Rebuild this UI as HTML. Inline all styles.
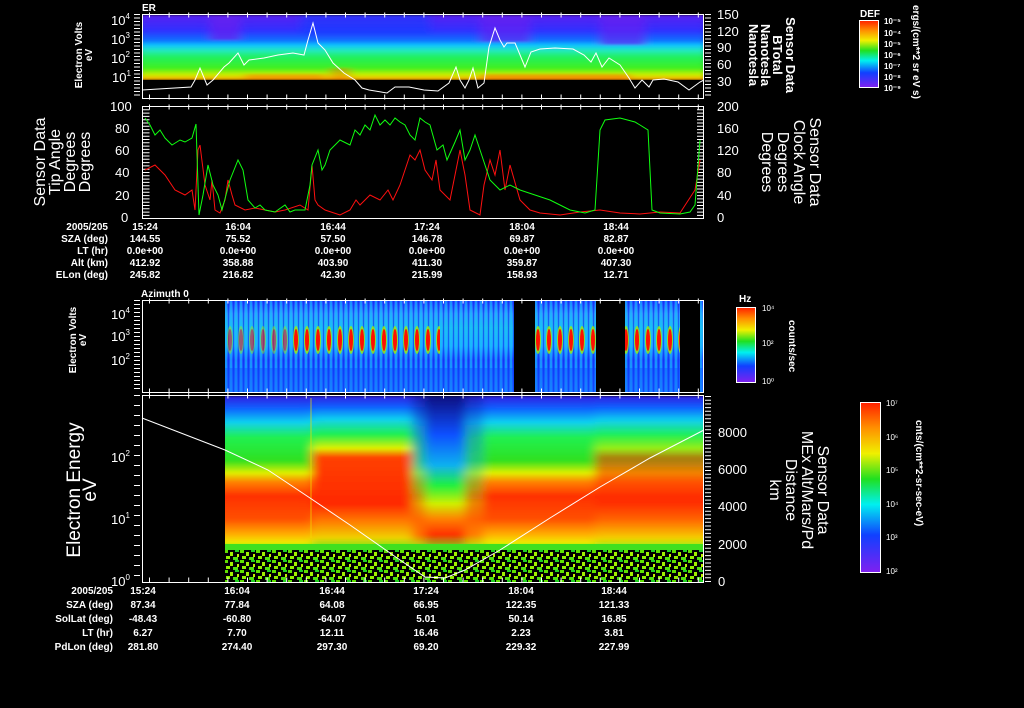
<!DOCTYPE html>
<html><head><meta charset="utf-8"><style>
html,body{margin:0;padding:0;background:#000;}
svg{display:block;}
text{font-family:"Liberation Sans",sans-serif;fill:#fff;}
.s{font-size:10px;font-weight:bold;}
.m{font-size:13px;}
</style></head><body>
<svg width="1024" height="708" viewBox="0 0 1024 708" xmlns="http://www.w3.org/2000/svg">
<defs>
<filter id="bx" x="0" y="0" width="1" height="1"><feGaussianBlur stdDeviation="5 1"/></filter>
<clipPath id="c1"><rect x="143" y="15" width="560" height="65"/></clipPath>
<clipPath id="c4"><rect x="225" y="396" width="479" height="154"/></clipPath>
<linearGradient id="g1" x1="0" y1="14" x2="0" y2="80" gradientUnits="userSpaceOnUse">
<stop offset="0" stop-color="#5a20f0"/><stop offset="0.25" stop-color="#3030ff"/><stop offset="0.4" stop-color="#1070ff"/><stop offset="0.47" stop-color="#10c0ff"/><stop offset="0.55" stop-color="#20e8c0"/><stop offset="0.65" stop-color="#20f060"/><stop offset="0.82" stop-color="#40f020"/><stop offset="0.92" stop-color="#c8f000"/><stop offset="1" stop-color="#ffa000"/></linearGradient>
<linearGradient id="cb" x1="0" y1="0" x2="0" y2="1">
<stop offset="0" stop-color="#ff2000"/><stop offset="0.15" stop-color="#ff9000"/><stop offset="0.3" stop-color="#f0f000"/><stop offset="0.45" stop-color="#20e020"/><stop offset="0.6" stop-color="#00f0f0"/><stop offset="0.78" stop-color="#1040ff"/><stop offset="1" stop-color="#8020f0"/></linearGradient>
<linearGradient id="g3" x1="0" y1="300" x2="0" y2="392" gradientUnits="userSpaceOnUse">
<stop offset="0" stop-color="#2040ff"/><stop offset="0.15" stop-color="#3090ff"/><stop offset="0.3" stop-color="#20b0f0"/><stop offset="0.5" stop-color="#20a0ff"/><stop offset="0.65" stop-color="#2050ff"/><stop offset="0.75" stop-color="#1a60ff"/><stop offset="1" stop-color="#2080ff"/></linearGradient>
<pattern id="st" x="0" y="0" width="5" height="92" patternUnits="userSpaceOnUse">
<rect x="0" y="0" width="2" height="92" fill="#10d0ff" opacity="0.5"/><rect x="3" y="0" width="1" height="92" fill="#0020f0" opacity="0.5"/></pattern>
<linearGradient id="g4a" x1="0" y1="396" x2="0" y2="550" gradientUnits="userSpaceOnUse">
<stop offset="0" stop-color="#3020e0"/><stop offset="0.08" stop-color="#1060ff"/><stop offset="0.17" stop-color="#10d0f0"/><stop offset="0.27" stop-color="#20f050"/><stop offset="0.42" stop-color="#30e020"/><stop offset="0.5" stop-color="#e0f000"/><stop offset="0.56" stop-color="#ff8000"/><stop offset="0.65" stop-color="#ff3000"/><stop offset="0.8" stop-color="#ff5000"/><stop offset="0.9" stop-color="#ffb000"/><stop offset="0.95" stop-color="#f0e800"/><stop offset="1" stop-color="#50f020"/></linearGradient>
<linearGradient id="g4b" x1="0" y1="396" x2="0" y2="550" gradientUnits="userSpaceOnUse">
<stop offset="0" stop-color="#3020e0"/><stop offset="0.07" stop-color="#1060ff"/><stop offset="0.15" stop-color="#10d0f0"/><stop offset="0.25" stop-color="#20f050"/><stop offset="0.34" stop-color="#e0f000"/><stop offset="0.4" stop-color="#ff4000"/><stop offset="0.7" stop-color="#ff2800"/><stop offset="0.82" stop-color="#ff8000"/><stop offset="0.92" stop-color="#f0d000"/><stop offset="1" stop-color="#50f020"/></linearGradient>
<linearGradient id="g4c" x1="0" y1="396" x2="0" y2="550" gradientUnits="userSpaceOnUse">
<stop offset="0" stop-color="#101080"/><stop offset="0.25" stop-color="#1050ff"/><stop offset="0.45" stop-color="#10b0f0"/><stop offset="0.58" stop-color="#20f040"/><stop offset="0.7" stop-color="#d0f000"/><stop offset="0.8" stop-color="#ff8000"/><stop offset="0.9" stop-color="#ff3000"/><stop offset="1" stop-color="#60f020"/></linearGradient>
<pattern id="sp" x="0" y="0" width="16" height="10" patternUnits="userSpaceOnUse">
<rect width="16" height="10" fill="#000"/><rect x="0" y="0" width="4" height="3" fill="#60e000"/><rect x="6" y="2" width="3" height="4" fill="#a0f000"/><rect x="11" y="0" width="4" height="2" fill="#20d020"/><rect x="2" y="6" width="4" height="3" fill="#90f000"/><rect x="9" y="7" width="5" height="3" fill="#50e010"/><rect x="13" y="4" width="2" height="3" fill="#c0f000"/></pattern>
<pattern id="red" x="225" y="300" width="11" height="92" patternUnits="userSpaceOnUse">
<ellipse cx="5" cy="40" rx="3" ry="14" fill="#a0f000" opacity="0.8"/><ellipse cx="5" cy="40" rx="2" ry="11" fill="#ff1000"/></pattern>
</defs>

<!-- Panel 1 -->
<text x="142" y="11" class="s">ER</text>
<g clip-path="url(#c1)"><g filter="url(#bx)">
<rect x="135" y="15" width="575" height="65" fill="url(#g1)"/>
<rect x="210" y="15" width="30" height="25" fill="#6a20f0" opacity="0.7"/>
<rect x="480" y="15" width="50" height="27" fill="#6a20f0" opacity="0.6"/>
<rect x="600" y="15" width="45" height="30" fill="#6a20f0" opacity="0.6"/>
<rect x="300" y="15" width="130" height="20" fill="#1040ff" opacity="0.5"/>
<rect x="245" y="74" width="80" height="6" fill="#ff7000" opacity="0.45"/>
<rect x="480" y="74" width="150" height="6" fill="#ff6000" opacity="0.45"/>
<rect x="330" y="68" width="20" height="12" fill="#ff6000" opacity="0.4"/>
</g></g>
<polyline fill="none" stroke="#fff" stroke-width="1" points="142,90 191,87 195,80 200,68 207,85 213,80 224,67 229,63 238,53 244,65 249,60 264,58 278,55 293,53 304,55 308,40 313,23 318,43 325,50 333,63 344,73 355,80 362,88 369,90 387,93 395,87 409,87 424,90 438,91 449,83 456,67 460,80 465,88 469,80 473,68 478,88 484,83 489,47 495,28 500,40 504,47 507,43 515,43 518,50 525,67 531,52 540,49 555,48 573,49 584,55 591,62 596,53 602,67 609,58 620,65 629,78 635,88 642,80 649,87 653,80 664,79 678,82 689,90 700,82 704,80"/>
<rect x="142.5" y="14.5" width="561" height="84" fill="none" stroke="#fff"/>
<line x1="148" y1="15" x2="703" y2="15" stroke="#fff" stroke-width="5" stroke-dasharray="1 18.6" stroke-dashoffset="-1"/>
<line x1="148" y1="97" x2="703" y2="97" stroke="#fff" stroke-width="5" stroke-dasharray="1 18.6" stroke-dashoffset="-1"/>
<line x1="137" y1="14" x2="137" y2="98" stroke="#fff" stroke-width="6" stroke-dasharray="1 2.5"/>
<line x1="708" y1="14" x2="708" y2="98" stroke="#fff" stroke-width="6" stroke-dasharray="1 2.5"/>
<text x="111" y="25" class="m">10<tspan font-size="8" dy="-6">4</tspan></text>
<text x="111" y="44" class="m">10<tspan font-size="8" dy="-6">3</tspan></text>
<text x="111" y="63" class="m">10<tspan font-size="8" dy="-6">2</tspan></text>
<text x="112" y="82" class="m">10<tspan font-size="8" dy="-6">1</tspan></text>
<g class="m"><text x="717" y="19">150</text><text x="717" y="36">120</text><text x="717" y="52">90</text><text x="717" y="69">60</text><text x="717" y="86">30</text></g>
<text class="s" transform="translate(82,55) rotate(-90)" text-anchor="middle">Electron Volts</text>
<text class="s" transform="translate(92,55) rotate(-90)" text-anchor="middle">eV</text>
<g class="m" font-weight="bold" text-anchor="middle">
<text transform="translate(786,55) rotate(90)">Sensor Data</text>
<text transform="translate(773,55) rotate(90)">BTotal</text>
<text transform="translate(761,55) rotate(90)">Nanotesla</text>
<text transform="translate(749,55) rotate(90)">Nanotesla</text></g>
<text x="860" y="17" class="s" font-size="9">DEF</text>
<rect x="859.5" y="20.5" width="19" height="67" fill="url(#cb)" stroke="#fff"/>
<g font-size="8" font-weight="bold"><text x="884" y="24">10⁻⁵</text><text x="884" y="36">10⁻⁴</text><text x="884" y="47">10⁻⁵</text><text x="884" y="58">10⁻⁶</text><text x="884" y="69">10⁻⁷</text><text x="884" y="80">10⁻⁸</text><text x="884" y="91">10⁻⁹</text></g>
<text class="s" font-size="9" transform="translate(913,5) rotate(90)">ergs/(cm**2 sr eV s)</text>

<!-- Panel 2 -->
<rect x="142.5" y="106.5" width="561" height="112" fill="none" stroke="#fff"/>
<line x1="146" y1="106" x2="146" y2="218" stroke="#fff" stroke-width="7" stroke-dasharray="1 2.3"/>
<line x1="700" y1="106" x2="700" y2="218" stroke="#fff" stroke-width="6" stroke-dasharray="1 2.3"/>
<line x1="148" y1="107" x2="703" y2="107" stroke="#fff" stroke-width="5" stroke-dasharray="1 18.6" stroke-dashoffset="-1"/>
<g class="m"><text x="110" y="111">100</text><text x="115" y="133">80</text><text x="115" y="155">60</text><text x="115" y="177">40</text><text x="115" y="200">20</text><text x="121" y="222">0</text></g>
<g class="m"><text x="717" y="111">200</text><text x="717" y="133">160</text><text x="717" y="155">120</text><text x="717" y="177">80</text><text x="717" y="200">40</text><text x="717" y="222">0</text></g>
<polyline fill="none" stroke="#ff1010" stroke-width="1" points="145,170 155,165 165,175 175,190 185,195 192,190 195,210 198,150 200,145 205,185 210,200 212,180 215,210 220,213 225,200 228,180 232,195 235,205 245,210 255,208 265,210 275,212 285,210 300,205 308,210 312,165 315,200 318,205 325,210 340,215 350,210 356,200 360,205 370,195 380,200 388,190 393,200 400,185 410,155 415,160 420,150 425,170 432,180 436,160 440,190 450,200 455,175 460,150 465,175 470,210 480,215 484,185 490,160 495,175 500,150 505,190 510,165 520,200 530,210 540,213 560,215 580,212 600,210 620,213 640,214 660,212 680,213 695,190 700,160"/>
<polyline fill="none" stroke="#10ff10" stroke-width="1" points="145,118 150,125 155,135 160,130 165,138 172,145 180,140 185,142 192,138 196,124 199,215 203,195 208,165 213,185 218,195 222,210 230,180 238,160 243,170 248,200 255,208 260,205 265,210 275,212 285,205 290,212 295,210 305,210 310,185 312,165 318,150 322,170 325,165 330,150 340,140 350,145 355,130 360,135 365,125 370,130 375,115 380,125 385,120 390,125 395,118 400,122 405,125 410,135 415,140 420,118 425,122 430,125 437,150 443,145 447,160 455,142 460,130 465,160 470,150 475,135 480,150 485,165 490,180 500,190 510,185 520,190 535,195 550,200 560,205 570,210 585,213 595,210 600,130 605,120 620,118 635,122 640,125 648,130 652,210 660,213 680,214 690,212 695,205 700,140"/>
<g font-size="16" fill="#ff1010" text-anchor="middle">
<text fill="#ff1010" transform="translate(45,162) rotate(-90)">Sensor Data</text>
<text fill="#ff1010" transform="translate(60,162) rotate(-90)">Tip Angle</text>
<text fill="#ff1010" transform="translate(75,162) rotate(-90)">Degrees</text>
<text fill="#ff1010" transform="translate(90,162) rotate(-90)">Degrees</text></g>
<g font-size="16" text-anchor="middle">
<text fill="#10f010" transform="translate(810,162) rotate(90)">Sensor Data</text>
<text fill="#10f010" transform="translate(794,162) rotate(90)">Clock Angle</text>
<text fill="#10f010" transform="translate(778,162) rotate(90)">Degrees</text>
<text fill="#10f010" transform="translate(762,162) rotate(90)">Degrees</text></g>

<g class="s" text-anchor="end"><text x="108" y="230">2005/205</text><text x="108" y="242">SZA (deg)</text><text x="108" y="254">LT (hr)</text><text x="108" y="266">Alt (km)</text><text x="108" y="278">ELon (deg)</text></g>
<g class="s" text-anchor="middle">
<text x="145" y="230">15:24</text><text x="238" y="230">16:04</text><text x="333" y="230">16:44</text><text x="427" y="230">17:24</text><text x="522" y="230">18:04</text><text x="616" y="230">18:44</text>
<text x="145" y="242">144.55</text><text x="238" y="242">75.52</text><text x="333" y="242">57.50</text><text x="427" y="242">146.78</text><text x="522" y="242">69.87</text><text x="616" y="242">82.87</text>
<text x="145" y="254">0.0e+00</text><text x="238" y="254">0.0e+00</text><text x="333" y="254">0.0e+00</text><text x="427" y="254">0.0e+00</text><text x="522" y="254">0.0e+00</text><text x="616" y="254">0.0e+00</text>
<text x="145" y="266">412.92</text><text x="238" y="266">358.88</text><text x="333" y="266">403.90</text><text x="427" y="266">411.30</text><text x="522" y="266">359.87</text><text x="616" y="266">407.30</text>
<text x="145" y="278">245.82</text><text x="238" y="278">216.82</text><text x="333" y="278">42.30</text><text x="427" y="278">215.99</text><text x="522" y="278">158.93</text><text x="616" y="278">12.71</text></g>

<!-- Panel 3 -->
<text x="141" y="297" class="s" font-weight="normal" font-size="11">Azimuth 0</text>
<rect x="225" y="301" width="479" height="91" fill="url(#g3)"/>
<rect x="225" y="301" width="479" height="91" fill="url(#st)"/>
<rect x="225" y="368" width="479" height="24" fill="#1040ff" opacity="0.35"/>
<rect x="225" y="301" width="65" height="91" fill="url(#red)" opacity="0.55"/>
<rect x="290" y="301" width="150" height="91" fill="url(#red)"/>
<rect x="535" y="301" width="61" height="91" fill="url(#red)"/>
<rect x="625" y="301" width="55" height="91" fill="url(#red)"/>
<rect x="514" y="301" width="21" height="91" fill="#000"/>
<rect x="596" y="301" width="29" height="91" fill="#000"/>
<rect x="680" y="301" width="20" height="91" fill="#000"/>
<rect x="142.5" y="300.5" width="561" height="92" fill="none" stroke="#fff"/>
<line x1="148" y1="301" x2="703" y2="301" stroke="#fff" stroke-width="5" stroke-dasharray="1 18.6" stroke-dashoffset="-1"/>
<line x1="148" y1="391" x2="703" y2="391" stroke="#fff" stroke-width="5" stroke-dasharray="1 18.6" stroke-dashoffset="-1"/>
<line x1="137" y1="300" x2="137" y2="392" stroke="#fff" stroke-width="6" stroke-dasharray="1 3"/>
<text x="111" y="319" class="m">10<tspan font-size="8" dy="-6">4</tspan></text>
<text x="111" y="341" class="m">10<tspan font-size="8" dy="-6">3</tspan></text>
<text x="111" y="365" class="m">10<tspan font-size="8" dy="-6">2</tspan></text>
<text class="s" transform="translate(76,340) rotate(-90)" text-anchor="middle">Electron Volts</text>
<text class="s" transform="translate(86,340) rotate(-90)" text-anchor="middle">eV</text>
<text x="739" y="302" class="s" font-size="8">Hz</text>
<rect x="736.5" y="307.5" width="19" height="75" fill="url(#cb)" stroke="#fff"/>
<g font-size="8"><text x="762" y="311">10⁴</text><text x="762" y="346">10²</text><text x="762" y="384">10⁰</text></g>
<text class="s" font-size="9" font-weight="normal" transform="translate(789,320) rotate(90)">counts/sec</text>

<!-- Panel 4 -->
<g clip-path="url(#c4)"><g filter="url(#bx)">
<rect x="215" y="396" width="500" height="154" fill="url(#g4a)"/>
<rect x="312" y="396" width="100" height="154" fill="url(#g4b)"/>
<rect x="595" y="396" width="120" height="154" fill="url(#g4b)" opacity="0.6"/>
<rect x="425" y="396" width="40" height="154" fill="url(#g4c)"/>
<rect x="412" y="396" width="15" height="154" fill="url(#g4c)" opacity="0.5"/>
<rect x="463" y="396" width="20" height="154" fill="url(#g4c)" opacity="0.4"/>
</g></g>
<rect x="225" y="550" width="479" height="32" fill="url(#sp)"/>
<rect x="225" y="544" width="479" height="6" fill="#40e020"/>
<rect x="310" y="398" width="2" height="140" fill="#f0e000" opacity="0.35"/>
<polyline fill="none" stroke="#fff" stroke-width="1" points="142,418 225,450 268,470 310,498 350,525 400,560 425,577 445,578 465,570 500,550 550,518 600,487 650,458 704,430"/>
<rect x="142.5" y="395.5" width="561" height="187" fill="none" stroke="#fff"/>
<line x1="148" y1="396" x2="703" y2="396" stroke="#fff" stroke-width="5" stroke-dasharray="1 18.6" stroke-dashoffset="-1"/>
<line x1="148" y1="580" x2="703" y2="580" stroke="#fff" stroke-width="5" stroke-dasharray="1 18.6" stroke-dashoffset="-1"/>
<line x1="137" y1="395" x2="137" y2="582" stroke="#fff" stroke-width="6" stroke-dasharray="1 9"/>
<line x1="708" y1="396" x2="708" y2="582" stroke="#fff" stroke-width="6" stroke-dasharray="1 2.7"/>
<text x="111" y="462" class="m">10<tspan font-size="8" dy="-6">2</tspan></text>
<text x="111" y="524" class="m">10<tspan font-size="8" dy="-6">1</tspan></text>
<text x="111" y="586" class="m">10<tspan font-size="8" dy="-6">0</tspan></text>
<g class="m"><text x="718" y="437">8000</text><text x="718" y="474">6000</text><text x="718" y="511">4000</text><text x="718" y="549">2000</text><text x="718" y="586">0</text></g>
<g font-size="19" text-anchor="middle">
<text transform="translate(80,490) rotate(-90)">Electron Energy</text>
<text transform="translate(96,490) rotate(-90)">eV</text></g>
<g font-size="16" text-anchor="middle">
<text transform="translate(818,490) rotate(90)">Sensor Data</text>
<text transform="translate(802,490) rotate(90)">MEx Alt/Mars/Pd</text>
<text transform="translate(786,490) rotate(90)">Distance</text>
<text transform="translate(770,490) rotate(90)">km</text></g>
<rect x="860.5" y="402.5" width="20" height="170" fill="url(#cb)" stroke="#fff"/>
<g font-size="8"><text x="886" y="406">10⁷</text><text x="886" y="440">10⁶</text><text x="886" y="473">10⁵</text><text x="886" y="507">10⁴</text><text x="886" y="540">10³</text><text x="886" y="574">10²</text></g>
<text class="s" font-size="9" font-weight="normal" transform="translate(916,420) rotate(90)">cnts/(cm**2-sr-sec-eV)</text>

<g class="s" font-size="11" font-weight="normal" text-anchor="end"><text x="113" y="594">2005/205</text><text x="113" y="608">SZA (deg)</text><text x="113" y="622">SolLat (deg)</text><text x="113" y="636">LT (hr)</text><text x="113" y="650">PdLon (deg)</text></g>
<g class="s" font-size="11" font-weight="normal" text-anchor="middle">
<text x="143" y="594">15:24</text><text x="237" y="594">16:04</text><text x="332" y="594">16:44</text><text x="426" y="594">17:24</text><text x="521" y="594">18:04</text><text x="614" y="594">18:44</text>
<text x="143" y="608">87.34</text><text x="237" y="608">77.84</text><text x="332" y="608">64.08</text><text x="426" y="608">66.95</text><text x="521" y="608">122.35</text><text x="614" y="608">121.33</text>
<text x="143" y="622">-48.43</text><text x="237" y="622">-60.80</text><text x="332" y="622">-64.07</text><text x="426" y="622">5.01</text><text x="521" y="622">50.14</text><text x="614" y="622">16.85</text>
<text x="143" y="636">6.27</text><text x="237" y="636">7.70</text><text x="332" y="636">12.11</text><text x="426" y="636">16.46</text><text x="521" y="636">2.23</text><text x="614" y="636">3.81</text>
<text x="143" y="650">281.80</text><text x="237" y="650">274.40</text><text x="332" y="650">297.30</text><text x="426" y="650">69.20</text><text x="521" y="650">229.32</text><text x="614" y="650">227.99</text></g>
</svg>
</body></html>
